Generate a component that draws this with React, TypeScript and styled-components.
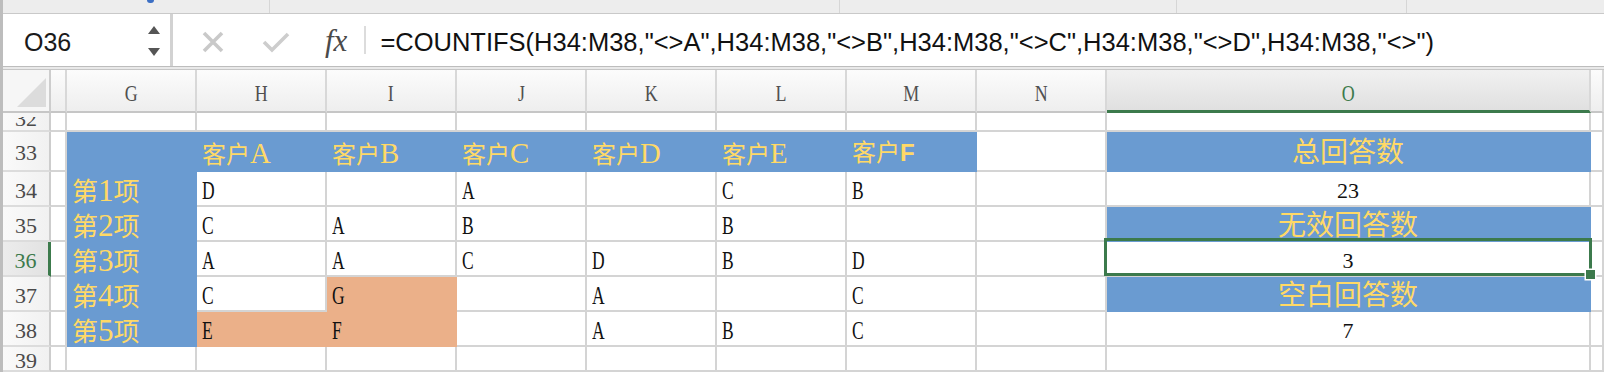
import React from 'react';
import styled, { createGlobalStyle } from 'styled-components';

const GREEN = '#3c7a4c';
const BLUE = '#6a9bd1';
const YELLOW = '#ffd966';
const ORANGE = '#ebb089';
const GRID = '#d4d4d4';

type Fill = 'white' | 'blue' | 'orange';

const fillColor = (f: Fill = 'white') =>
  f === 'blue' ? BLUE : f === 'orange' ? ORANGE : '#ffffff';

const GlobalStyle = createGlobalStyle`
  html, body { margin: 0; padding: 0; background: #ffffff; overflow: hidden; }
  #root { width: 1604px; height: 372px; }
`;

const Window = styled.div`
  width: 1604px;
  height: 372px;
  overflow: hidden;
  box-sizing: border-box;
  border-left: 3px solid #bdbdbd;
  display: flex;
  flex-direction: column;
  background: #ffffff;
`;

const TopStrip = styled.div`
  flex: none;
  height: 13px;
  background: #ededed;
  border-bottom: 1px solid #c9c9c9;
  display: flex;
`;

const StripSegment = styled.div<{ $w?: number }>`
  flex: ${p => (p.$w ? `0 0 ${p.$w}px` : '1 1 auto')};
  box-sizing: border-box;
  border-right: ${p => (p.$w ? '1px solid #d6d6d6' : 'none')};
  display: flex;
  justify-content: flex-start;
`;

const Dot = styled.div`
  margin-left: 144px;
  width: 7px;
  height: 3px;
  border-radius: 0 0 4px 4px;
  background: #3c6fc4;
`;

const FormulaBar = styled.div`
  flex: none;
  height: 52px;
  display: flex;
  align-items: stretch;
  background: #ffffff;
`;

const NameBox = styled.div`
  flex: 0 0 170px;
  box-sizing: border-box;
  border-right: 3px solid #d2d2d2;
  display: flex;
  align-items: center;
  justify-content: space-between;
  padding: 0 10px 0 21px;
`;

const NameText = styled.span`
  font-family: 'Liberation Sans', Arial, sans-serif;
  font-size: 25px;
  color: #1a1a1a;
  padding-top: 4px;
`;

const Spinner = styled.div`
  display: flex;
  flex-direction: column;
  gap: 14px;
  padding-top: 2px;
`;

const Arrow = styled.div<{ $up?: boolean }>`
  width: 0;
  height: 0;
  border-left: 6.5px solid transparent;
  border-right: 6.5px solid transparent;
  ${p => (p.$up ? 'border-bottom: 8px solid #555;' : 'border-top: 8px solid #555;')}
`;

const Controls = styled.div`
  flex: 1 1 auto;
  display: flex;
  align-items: center;
  padding-top: 4px;
  min-width: 0;
`;

const IconSlot = styled.div<{ $ml: number }>`
  margin-left: ${p => p.$ml}px;
  display: flex;
  align-items: center;
`;

const Fx = styled.span`
  margin-left: 35px;
  font-family: 'Liberation Serif', 'Times New Roman', serif;
  font-style: italic;
  font-size: 31px;
  color: #4a4a4a;
  line-height: 1;
  margin-top: -4px;
`;

const Divider = styled.div`
  margin-left: 17px;
  width: 2px;
  height: 28px;
  background: #dcdcdc;
  margin-top: -4px;
`;

const Formula = styled.span`
  margin-left: 14px;
  font-family: 'Liberation Sans', Arial, sans-serif;
  font-size: 25.5px;
  color: #111;
  white-space: nowrap;
`;

const DoubleLine = styled.div`
  flex: none;
  height: 2px;
  background: #e9e9e9;
  border-top: 1px solid #bdbdbd;
  border-bottom: 1px solid #c6c6c6;
`;

const Sheet = styled.div`
  flex: 1 1 auto;
  display: grid;
  grid-template-columns: 48px 16px repeat(8, 130px) 484px 1fr;
  grid-template-rows: 43px 19px 40px repeat(5, 35px) 25px;
  overflow: hidden;
`;

const Corner = styled.div`
  box-sizing: border-box;
  background: #f6f6f6;
  border-right: 2px solid #cdcdcd;
  border-bottom: 2px solid #c6c6c6;
  display: flex;
  align-items: flex-end;
  justify-content: flex-end;
  padding: 0 3px 4px 0;
`;

const ColHead = styled.div<{ $active?: boolean }>`
  box-sizing: border-box;
  background: ${p =>
    p.$active
      ? 'linear-gradient(to bottom, #f1f1f1, #e0e0e0)'
      : 'linear-gradient(to bottom, #fcfcfc, #eeeeee)'};
  border-right: 2px solid #d8d8d8;
  border-bottom: ${p => (p.$active ? `3px solid ${GREEN}` : '2px solid #c6c6c6')};
  display: flex;
  align-items: center;
  justify-content: center;
  padding-top: 7px;
  font-family: 'Liberation Serif', 'Times New Roman', serif;
  font-size: 23px;
  color: ${p => (p.$active ? GREEN : '#505050')};
`;

const ColLetter = styled.span`
  display: inline-block;
  transform: scaleX(0.78);
`;

const RowHead = styled.div<{ $active?: boolean; $partial?: boolean }>`
  box-sizing: border-box;
  background: ${p =>
    p.$active
      ? 'linear-gradient(to right, #ececec, #e2e2e2)'
      : 'linear-gradient(to right, #fafafa, #f1f1f1)'};
  border-right: ${p => (p.$active ? `3px solid ${GREEN}` : '2px solid #cdcdcd')};
  border-bottom: 2px solid #dcdcdc;
  display: flex;
  align-items: ${p => (p.$partial ? 'flex-end' : 'center')};
  justify-content: center;
  padding-top: ${p => (p.$partial ? 0 : 4)}px;
  overflow: hidden;
  font-family: 'Liberation Serif', 'Times New Roman', serif;
  font-size: 22px;
  color: ${p => (p.$active ? GREEN : '#4a4a4a')};
`;

const PartialClip = styled.div`
  height: 13px;
  overflow: hidden;
  display: flex;
  align-items: flex-end;
  line-height: 1;
`;

const Cell = styled.div<{ $fill?: Fill; $center?: boolean }>`
  box-sizing: border-box;
  position: relative;
  min-width: 0;
  display: flex;
  align-items: center;
  justify-content: ${p => (p.$center ? 'center' : 'flex-start')};
  padding: 4px 0 0 ${p => (p.$center ? 0 : 5)}px;
  background: ${p => fillColor(p.$fill)};
  border-right: 2px solid ${p => (p.$fill && p.$fill !== 'white' ? fillColor(p.$fill) : GRID)};
  border-bottom: 2px solid ${p => (p.$fill && p.$fill !== 'white' ? fillColor(p.$fill) : GRID)};
  white-space: nowrap;
`;

const Label = styled.span<{ $size: number }>`
  font-family: 'Liberation Serif', 'Noto Sans CJK SC', serif;
  font-size: ${p => p.$size}px;
  color: ${YELLOW};
  line-height: 1;
`;

const LatinPart = styled.span<{ $bold?: boolean }>`
  font-family: ${p => (p.$bold ? "'Liberation Sans', Arial, sans-serif" : "'Liberation Serif', serif")};
  font-weight: ${p => (p.$bold ? 700 : 400)};
  font-size: ${p => (p.$bold ? '1em' : '1.2em')};
`;

const Letter = styled.span`
  display: inline-block;
  font-family: 'Liberation Serif', 'Times New Roman', serif;
  font-size: 25px;
  color: #111;
  transform: scaleX(0.7);
  transform-origin: left center;
`;

const Num = styled.span`
  font-family: 'Liberation Serif', 'Times New Roman', serif;
  font-size: 22px;
  color: #111;
`;

const Selection = styled.div`
  position: absolute;
  top: -4px;
  left: -3px;
  right: -3px;
  bottom: -1px;
  border: 3px solid ${GREEN};
  z-index: 2;
  pointer-events: none;
`;

const FillHandle = styled.div`
  position: absolute;
  right: -6px;
  bottom: -6px;
  width: 9px;
  height: 9px;
  background: ${GREEN};
  box-shadow: 0 0 0 1.5px #ffffff;
`;

type Spec = {
  fill?: Fill;
  head?: [string, string];
  bold?: boolean;
  label?: [string, string, string];
  letter?: string;
  total?: string;
  num?: string;
  selected?: boolean;
};

const COLS = ['', 'G', 'H', 'I', 'J', 'K', 'L', 'M', 'N', 'O', ''];

const e: Spec = {};
const b: Spec = { fill: 'blue' };

type RowSpec = { n: number; cells: Spec[] };

const ROWS: RowSpec[] = [
  { n: 32, cells: [e, e, e, e, e, e, e, e, e, e, e] },
  {
    n: 33,
    cells: [
      e,
      b,
      { fill: 'blue', head: ['客户', 'A'] },
      { fill: 'blue', head: ['客户', 'B'] },
      { fill: 'blue', head: ['客户', 'C'] },
      { fill: 'blue', head: ['客户', 'D'] },
      { fill: 'blue', head: ['客户', 'E'] },
      { fill: 'blue', head: ['客户', 'F'], bold: true },
      e,
      { fill: 'blue', total: '总回答数' },
      e,
    ],
  },
  {
    n: 34,
    cells: [
      e,
      { fill: 'blue', label: ['第', '1', '项'] },
      { letter: 'D' },
      e,
      { letter: 'A' },
      e,
      { letter: 'C' },
      { letter: 'B' },
      e,
      { num: '23' },
      e,
    ],
  },
  {
    n: 35,
    cells: [
      e,
      { fill: 'blue', label: ['第', '2', '项'] },
      { letter: 'C' },
      { letter: 'A' },
      { letter: 'B' },
      e,
      { letter: 'B' },
      e,
      e,
      { fill: 'blue', total: '无效回答数' },
      e,
    ],
  },
  {
    n: 36,
    cells: [
      e,
      { fill: 'blue', label: ['第', '3', '项'] },
      { letter: 'A' },
      { letter: 'A' },
      { letter: 'C' },
      { letter: 'D' },
      { letter: 'B' },
      { letter: 'D' },
      e,
      { num: '3', selected: true },
      e,
    ],
  },
  {
    n: 37,
    cells: [
      e,
      { fill: 'blue', label: ['第', '4', '项'] },
      { letter: 'C' },
      { fill: 'orange', letter: 'G' },
      e,
      { letter: 'A' },
      e,
      { letter: 'C' },
      e,
      { fill: 'blue', total: '空白回答数' },
      e,
    ],
  },
  {
    n: 38,
    cells: [
      e,
      { fill: 'blue', label: ['第', '5', '项'] },
      { fill: 'orange', letter: 'E' },
      { fill: 'orange', letter: 'F' },
      e,
      { letter: 'A' },
      { letter: 'B' },
      { letter: 'C' },
      e,
      { num: '7' },
      e,
    ],
  },
  { n: 39, cells: [e, e, e, e, e, e, e, e, e, e, e] },
];

const CellContent: React.FC<{ s: Spec }> = ({ s }) => {
  if (s.head)
    return (
      <Label $size={24}>
        {s.head[0]}
        <LatinPart $bold={s.bold}>{s.head[1]}</LatinPart>
      </Label>
    );
  if (s.label)
    return (
      <Label $size={26}>
        {s.label[0]}
        <LatinPart>{s.label[1]}</LatinPart>
        {s.label[2]}
      </Label>
    );
  if (s.total) return <Label $size={28}>{s.total}</Label>;
  if (s.letter) return <Letter>{s.letter}</Letter>;
  if (s.num) return <Num>{s.num}</Num>;
  return null;
};

const XIcon = () => (
  <svg width="22" height="22" viewBox="0 0 22 22">
    <path d="M2 2 L20 20 M20 2 L2 20" stroke="#c9c9c9" strokeWidth="3.6" fill="none" />
  </svg>
);

const CheckIcon = () => (
  <svg width="28" height="22" viewBox="0 0 28 22">
    <path d="M2 11 L10 19 L26 3" stroke="#cdcdcd" strokeWidth="3.6" fill="none" />
  </svg>
);

const CornerTriangle = () => (
  <svg width="29" height="29" viewBox="0 0 29 29">
    <polygon points="29,0 29,29 0,29" fill="#dcdcdc" />
  </svg>
);

export default function App() {
  return (
    <>
      <GlobalStyle />
      <Window>
        <TopStrip>
          <StripSegment $w={267}>
            <Dot />
          </StripSegment>
          <StripSegment $w={570} />
          <StripSegment $w={337} />
          <StripSegment $w={230} />
          <StripSegment />
        </TopStrip>
        <FormulaBar>
          <NameBox>
            <NameText>O36</NameText>
            <Spinner>
              <Arrow $up />
              <Arrow />
            </Spinner>
          </NameBox>
          <Controls>
            <IconSlot $ml={29}>
              <XIcon />
            </IconSlot>
            <IconSlot $ml={38}>
              <CheckIcon />
            </IconSlot>
            <Fx>fx</Fx>
            <Divider />
            <Formula>
              =COUNTIFS(H34:M38,"&lt;&gt;A",H34:M38,"&lt;&gt;B",H34:M38,"&lt;&gt;C",H34:M38,"&lt;&gt;D",H34:M38,"&lt;&gt;")
            </Formula>
          </Controls>
        </FormulaBar>
        <DoubleLine />
        <Sheet>
          <Corner>
            <CornerTriangle />
          </Corner>
          {COLS.map((c, i) => (
            <ColHead key={`h${i}`} $active={c === 'O'}>
              <ColLetter>{c}</ColLetter>
            </ColHead>
          ))}
          {ROWS.map(row => (
            <React.Fragment key={row.n}>
              <RowHead $active={row.n === 36} $partial={row.n === 32}>
                {row.n === 32 ? <PartialClip>{row.n}</PartialClip> : row.n}
              </RowHead>
              {row.cells.map((s, i) => (
                <Cell key={i} $fill={s.fill} $center={!!(s.total || s.num)}>
                  <CellContent s={s} />
                  {s.selected && (
                    <Selection>
                      <FillHandle />
                    </Selection>
                  )}
                </Cell>
              ))}
            </React.Fragment>
          ))}
        </Sheet>
      </Window>
    </>
  );
}
